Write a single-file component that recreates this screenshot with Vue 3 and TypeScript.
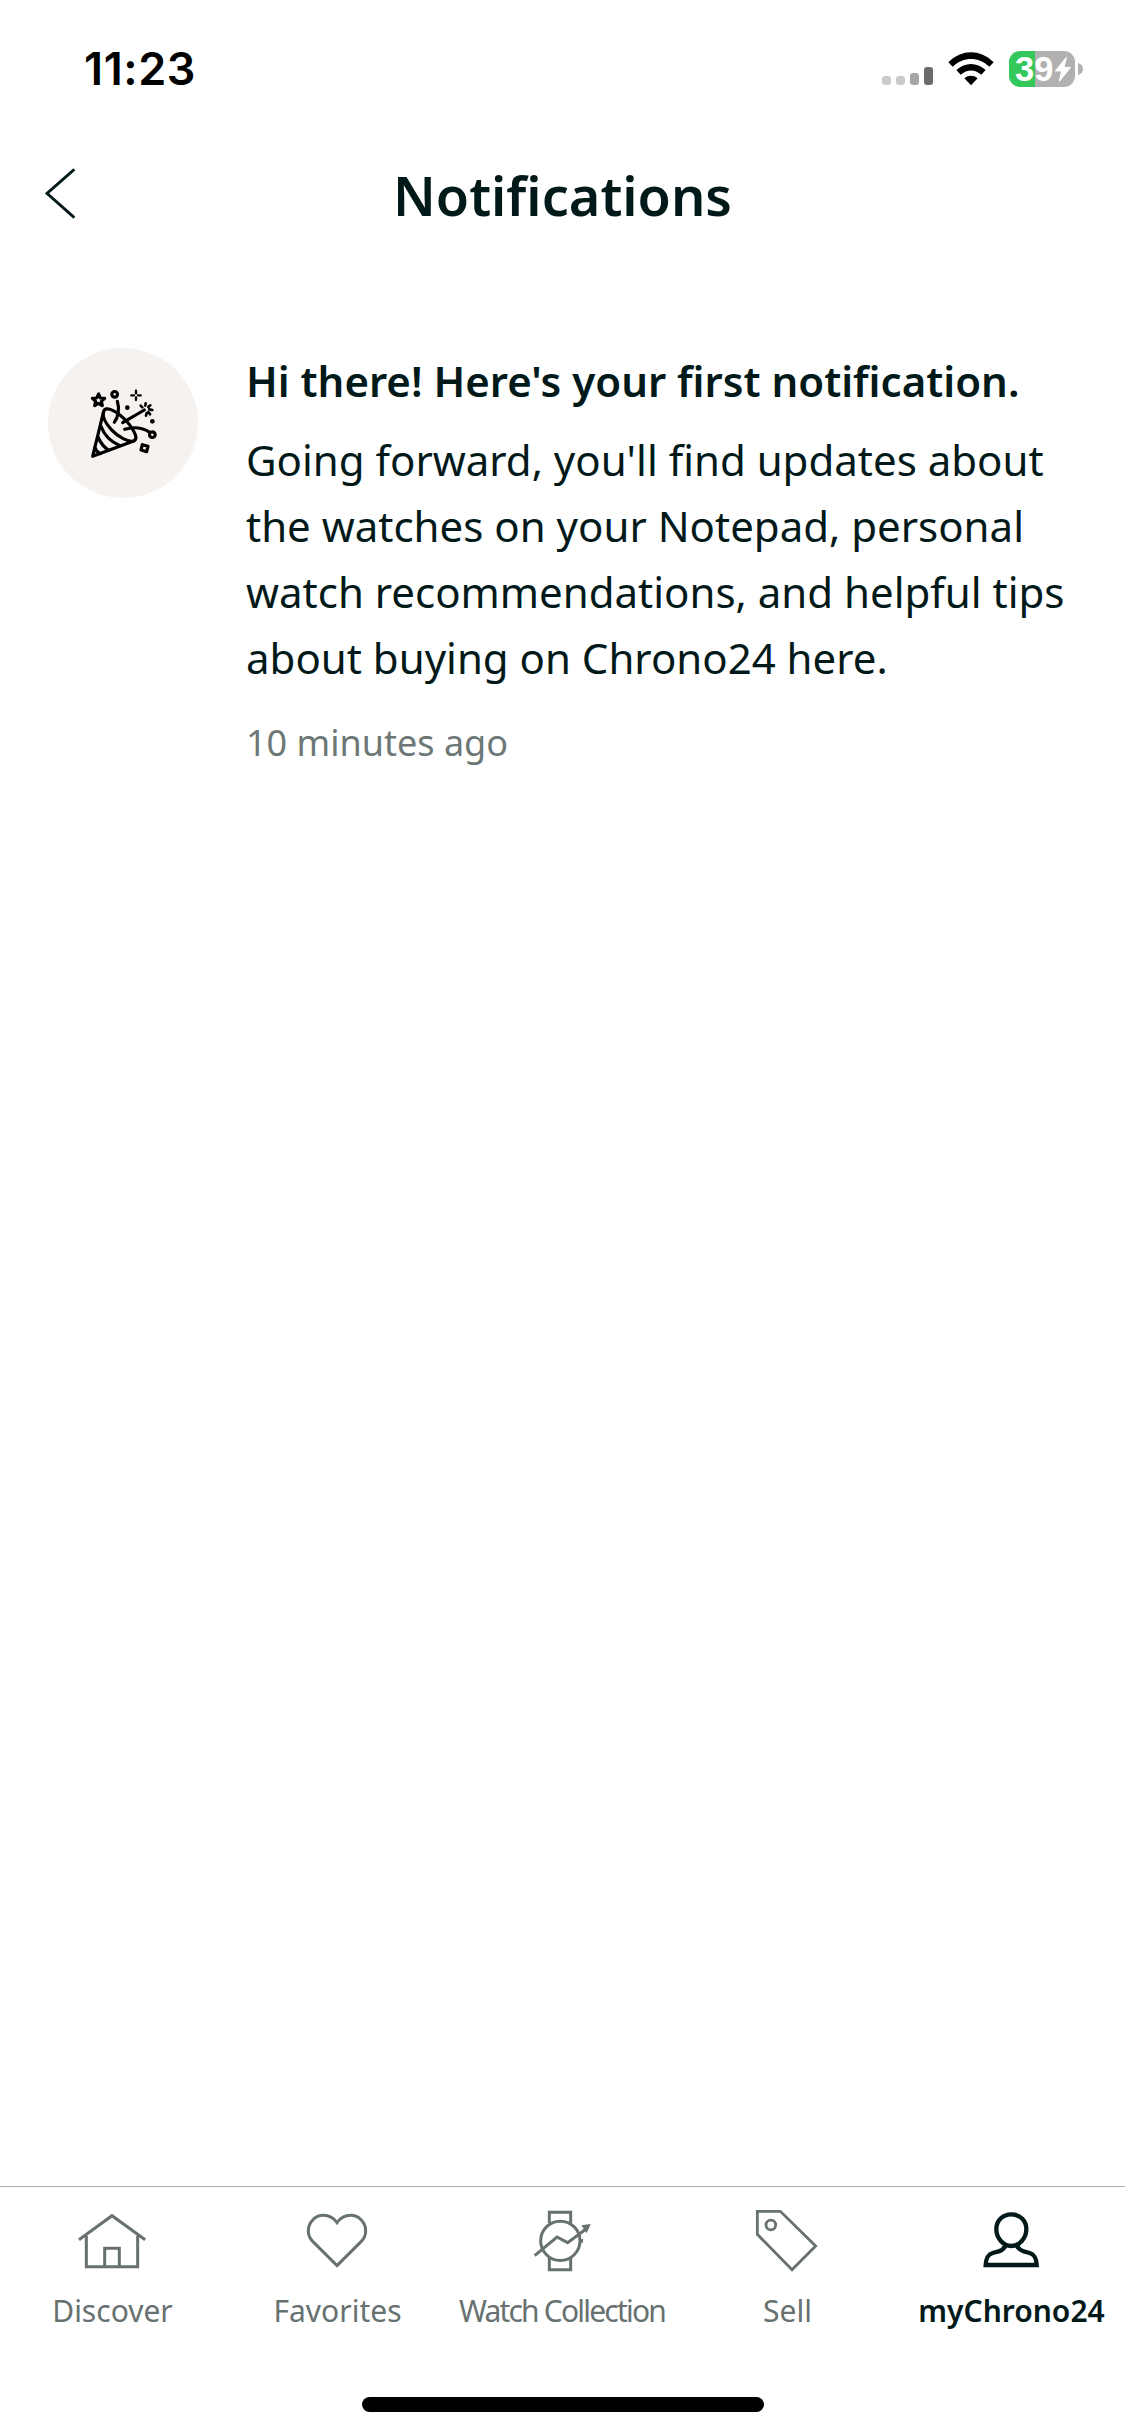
<script setup lang="ts">
interface Shape {
  d: string
  fill?: boolean
}
interface Tab {
  label: string
  viewBox: string
  stroke: number
  shapes: Shape[]
  active?: boolean
  tight?: boolean
}

const tabs: Tab[] = [
  {
    label: 'Discover',
    viewBox: '141 102 216 216',
    stroke: 9,
    shapes: [
      { d: 'M147 209.500L246 137L345.500 209.500' },
      { d: 'M169 197V290H323V197' },
      { d: 'M224 290V235H268V290' },
    ],
  },
  {
    label: 'Favorites',
    viewBox: '816 102 216 216',
    stroke: 9,
    shapes: [
      {
        d: 'M921 158C911 144 897 136 880 136C855 136 835 157 835 183C835 195 839 205 848 214L921 287L994 214C1003 205 1007 195 1007 183C1007 157 987 136 962 136C945 136 931 144 921 158Z',
      },
    ],
  },
  {
    label: 'Watch Collection',
    viewBox: '291 102 216 216',
    stroke: 9,
    tight: true,
    shapes: [
      { d: 'M358 160V127H422V160M358 264V299H422V264' },
      { d: 'M332 212.500A59 59 0 1 0 450 212.500A59 59 0 1 0 332 212.500Z' },
      { d: 'M314 257L381 201L413 218L468 177' },
      { d: 'M454 166L482 162L470 190Z', fill: true },
      { d: 'M453 207H459V218H453Z', fill: true },
    ],
  },
  {
    label: 'Sell',
    viewBox: '156 102 216 216',
    stroke: 8.5,
    shapes: [
      { d: 'M172 124H241L347 228L276 299L172 193Z' },
      { d: 'M198 165A14.500 14.500 0 1 0 227 165A14.500 14.500 0 1 0 198 165Z' },
    ],
  },
  {
    label: 'myChrono24',
    viewBox: '831 102 216 216',
    stroke: 13,
    active: true,
    shapes: [
      { d: 'M934 133C908 133 889 152 889 178C889 205 910 228 934 228C958 228 979 205 979 178C979 152 960 133 934 133Z' },
      { d: 'M916 228C912 236 906 241 896 244L878 249C863 254 858 264 857 285H1010C1009 264 1004 254 989 249L971 244C961 241 955 236 951 228' },
    ],
  },
]
</script>

<template>
  <div class="screen">
    <header class="status">
      <span class="clock">11:23</span>
      <div class="indicators">
        <svg class="signal" width="52" height="22" viewBox="0 0 52 22">
          <rect x="0" y="11" width="9" height="9" rx="3" fill="#cbcbcb" />
          <rect x="14" y="11" width="9" height="9" rx="3" fill="#cbcbcb" />
          <rect x="28" y="8" width="9" height="12" rx="3" fill="#a5a5a5" />
          <rect x="42" y="2" width="9" height="18" rx="3" fill="#6b6b6b" />
        </svg>
        <svg class="wifi" width="46" height="34" viewBox="0 0 138 102">
          <path d="M1 31C41 -9 97 -9 137 31L124 44C91 13 47 13 14 44Z" />
          <path d="M25 54C51 30 87 30 113 54L100 68C80 51 58 51 38 68Z" />
          <path d="M49 79C61 69 77 69 89 79L69 100Z" />
        </svg>
        <div class="battery">
          <div class="cell">
            <span>39</span>
            <svg class="bolt" width="16" height="25" viewBox="0 0 48 75">
              <path d="M34 1L1 42H20L13 73L47 31H27Z" fill="#fff" stroke="#fff" stroke-width="3" stroke-linejoin="round" />
            </svg>
          </div>
          <svg width="5" height="12" viewBox="0 0 5 12"><path d="M0 0C3.500 1 5 3 5 6C5 9 3.500 11 0 12Z" fill="#b1b1b1" /></svg>
        </div>
      </div>
    </header>

    <nav class="titlebar">
      <button class="back" aria-label="Back">
        <svg width="32" height="52" viewBox="0 0 96 156">
          <path d="M88 4L6 76L88 149" fill="none" stroke="currentColor" stroke-width="8.500" />
        </svg>
      </button>
      <h1>Notifications</h1>
    </nav>

    <main>
      <article class="notice">
        <div class="avatar">
          <svg width="150" height="150" viewBox="24 24 450 450" fill="none" stroke="#000" stroke-width="9.500" stroke-linecap="round" stroke-linejoin="round">
            <path d="M190 218L158 349L281 303" />
            <path d="M190 218C192 204 204 204 218 211C248 226 278 260 287 287C289 296 287 301 281 303C265 307 235 292 214 269C197 250 187 231 190 218Z" />
            <path d="M183 259C192 285 211 305 240 317M174 291C181 307 191 321 205 330M165 323C168 332 174 338 181 341" />
            <path d="M232 184C239 205 235 232 223 247M248 248L313 210M254 268C280 260 306 263 326 275" />
            <path d="M176 162L181 174L194 175L184 184L187 197L175 190L164 197L167 184L157 175L170 174Z" />
            <circle cx="224" cy="163" r="8.500" />
            <circle cx="337" cy="284" r="8.500" />
            <path d="M307 314L324 319L320 335L303 330Z" />
            <path d="M288 152V160M288 172V180M274 166H282M294 166H302" stroke-width="7" />
            <path d="M317 190L316 197M331 196L325 201M337 210L328 208M330 223L325 216M318 227L320 219M302 197L307 202" stroke-width="8" />
            <g fill="#000" stroke="none">
              <circle cx="262" cy="203" r="7" />
              <circle cx="337" cy="244" r="7" />
            </g>
          </svg>
        </div>
        <div class="body">
          <h2>Hi there! Here's your first notification.</h2>
          <p>Going forward, you'll find updates about the watches on your Notepad, personal watch recommendations, and helpful tips about buying on Chrono24 here.</p>
          <time>10 minutes ago</time>
        </div>
      </article>
    </main>

    <footer>
      <div class="tabs">
        <a v-for="t in tabs" :key="t.label" class="tab" :class="{ active: t.active, tight: t.tight }">
          <svg width="72" height="72" :viewBox="t.viewBox">
            <path
              v-for="s in t.shapes"
              :key="s.d"
              :d="s.d"
              :fill="s.fill ? 'currentColor' : 'none'"
              :stroke="s.fill ? 'none' : 'currentColor'"
              :stroke-width="t.stroke"
            />
          </svg>
          <span>{{ t.label }}</span>
        </a>
      </div>
      <div class="home-bar"></div>
    </footer>
  </div>
</template>

<style>
body {
  background: #fff;
}
</style>

<style scoped>
.screen {
  width: 1125px;
  height: 2436px;
  display: flex;
  flex-direction: column;
  background: #fff;
  color: #02191a;
  font-family: 'Noto Sans', sans-serif;
  overflow: hidden;
}
.status {
  height: 138px;
  display: flex;
  justify-content: space-between;
  box-sizing: border-box;
  padding: 41px 42px 0 84px;
}
.clock {
  font: 600 45px/56px Inter, sans-serif;
  letter-spacing: 0.6px;
  color: #000;
}
.indicators {
  display: flex;
  align-items: flex-start;
}
.signal {
  margin: 24px 14px 0 0;
}
.wifi {
  margin: 11px 15px 0 0;
}
.battery {
  display: flex;
  align-items: center;
  gap: 3px;
  margin-top: 10px;
}
.cell {
  width: 66px;
  height: 36px;
  border-radius: 11px;
  background: linear-gradient(90deg, #34c759 26px, #b1b1b1 26px);
  display: flex;
  align-items: center;
  box-sizing: border-box;
  padding-left: 6px;
  gap: 2px;
  color: #fff;
  font: 700 34.5px/36px 'Liberation Sans', sans-serif;
}
.bolt {
  flex: none;
}
.titlebar {
  height: 210px;
  display: grid;
  grid-template-columns: 120px 1fr 120px;
  align-items: start;
}
.back {
  border: 0;
  padding: 0;
  margin: 30px 0 0 45px;
  background: none;
  color: inherit;
  line-height: 0;
  text-align: left;
}
h1 {
  margin: 21px 0 0;
  font-size: 54px;
  line-height: 72px;
  font-weight: 600;
  text-align: center;
}
main {
  flex: 1;
}
.notice {
  display: flex;
  gap: 48px;
  padding: 0 48px;
}
.avatar {
  flex: none;
  width: 150px;
  height: 150px;
  border-radius: 50%;
  background: #f6f2f0;
}
.body {
  width: 831px;
}
h2 {
  margin: 0 0 13px;
  font-size: 42px;
  line-height: 66px;
  font-weight: 600;
  white-space: nowrap;
}
p {
  margin: 0 0 25px;
  font-size: 42px;
  line-height: 66px;
}
time {
  display: block;
  font-size: 36px;
  line-height: 54px;
  color: #6c7776;
}
footer {
  height: 250px;
  box-sizing: border-box;
  border-top: 1px solid #a9aeae;
  display: flex;
  flex-direction: column;
  align-items: center;
}
.tabs {
  display: flex;
  width: 100%;
  height: 210px;
  padding-top: 17px;
  box-sizing: border-box;
}
.tab {
  width: 225px;
  display: flex;
  flex-direction: column;
  align-items: center;
  gap: 14px;
  color: #67716f;
  font-size: 30px;
  line-height: 42px;
  white-space: nowrap;
}
.tab.tight {
  letter-spacing: -1.8px;
}
.tab.tight span {
  margin-right: 1px;
}
.tab.active {
  color: #02191a;
  font-weight: 600;
}
.tab.active span {
  margin-right: 2px;
}
.home-bar {
  width: 402px;
  height: 15px;
  border-radius: 8px;
  background: #000;
}
</style>
